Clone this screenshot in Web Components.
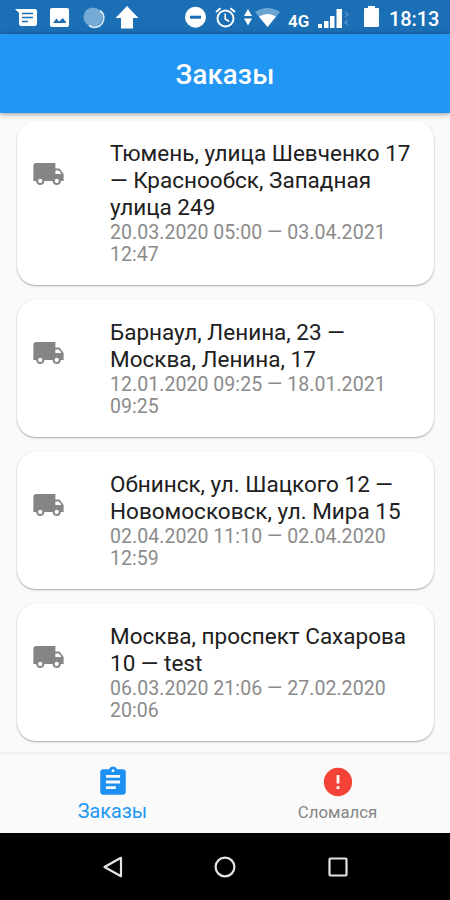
<!DOCTYPE html>
<html lang="ru">
<head>
<meta charset="utf-8">
<title>Заказы</title>
<style>
html,body{margin:0;height:100%;overflow:hidden}
body{font-family:Roboto,"Noto Sans",sans-serif;background:#fafafa}
</style>
</head>
<body>
<orders-app></orders-app>
<script>
const define = (name, html) => customElements.define(name, class extends HTMLElement {
  constructor() {
    super();
    this.attachShadow({ mode: 'open' }).innerHTML = html;
  }
});

define('status-bar', `
<style>
:host{display:block;height:34px;background:#1b6fb5;color:#fff;flex:none}
.row{display:grid;height:34px;grid-template-columns:15px 30px 34px 30px 71px 29px 34px 12px 33px 30px 46px 25px auto;align-items:center;white-space:nowrap}
svg{display:block;overflow:visible}
.net{font-size:17px;font-weight:600;padding-top:8px}
.time{font-size:20px;font-weight:500;padding-top:3px;letter-spacing:-.1px}
</style>
<div class="row">
<span></span>
<svg width="23" height="34" viewBox="0 0 23 34"><path fill="#fff" d="M0 9h20q2 0 2 2v13q0 2-2 2H6q-2 0-2-2V13z"/><path stroke="#1b6fb5" stroke-width="1.6" d="M7 13.5h11M7 17.5h11M7 21.5h6"/></svg>
<svg width="24" height="34" viewBox="0 0 24 34"><rect x="5" y="8" width="19" height="19" rx="2" fill="#fff"/><path fill="#1b6fb5" d="M8 23l3.500-4.500 2.500 3L18 18l3.500 5z"/></svg>
<svg width="22" height="34" viewBox="0 0 22 34"><circle cx="14" cy="17" r="9.500" fill="#75aad5"/><path d="M21 10.500a9.300 9.300 0 0 1-11 15" fill="none" stroke="#dbe9f5" stroke-width="1.800"/></svg>
<svg width="26" height="34" viewBox="0 0 26 34"><path fill="#fff" d="M18 6L29.500 18H24v10.500H12V18H6.500z"/></svg>
<svg width="24" height="34" viewBox="0 0 24 34"><circle cx="15.500" cy="17.200" r="10.500" fill="#fff"/><path fill="#1b6fb5" d="M10 15.700h11v3H10z"/></svg>
<svg width="22" height="34" viewBox="0 0 22 34"><g fill="none" stroke="#fff" stroke-width="2"><circle cx="16.500" cy="18.500" r="8"/><path d="M7 12l4.500-3.800M26 12l-4.500-3.800"/><path stroke-width="1.600" d="M16.200 13.500v5.500l4 2.500"/></g></svg>
<svg width="10" height="34" viewBox="0 0 10 34"><path fill="#fff" d="M1 16l4-7 4 7zM1 18.500h8l-4 7z"/></svg>
<svg width="26" height="34" viewBox="0 0 26 34"><path fill="#6ca4d2" d="M0 12Q12.500 4 25 12L12.500 27z"/><path fill="#fff" d="M4 16.500q8.500-5 17 0L12.500 27z"/></svg>
<span class="net">4G</span>
<svg width="34" height="34" viewBox="0 0 34 34"><path fill="#fff" d="M0 24h4v4H0zM6 21h4.500v7H6zM12 16h4.500v12H12zM18.500 9H24v19h-5.500z"/><path fill="none" stroke="#5793c4" stroke-width="1.500" d="M27 12l3 2.500-3 2.500M30 20l-3 2.500 3 2.500"/></svg>
<svg width="16" height="34" viewBox="0 0 16 34"><path fill="#fff" d="M1 8h3V6h7v2h3q1 0 1 1v17q0 1-1 1H1q-1 0-1-1V9q0-1 1-1z"/></svg>
<span class="time">18:13</span>
</div>`);

define('app-bar', `
<style>
:host{display:flex;height:79px;flex:none;background:#2196f3;color:#fff;align-items:center;justify-content:center;font-size:27.500px;font-weight:500;line-height:36px;box-shadow:0 1px 5px rgba(0,0,0,.42);z-index:1;position:relative;letter-spacing:.2px;padding:2px 0 0;box-sizing:border-box}
</style><slot></slot>`);

define('order-card', `
<style>
:host{display:grid;grid-template-columns:78px 1fr;background:#fff;border-radius:19px;padding:19px 14px 18px 15px;margin-bottom:15px;box-shadow:0 1px 2px rgba(0,0,0,.34);box-sizing:border-box;margin-left:17px;margin-right:16px;white-space:nowrap}
svg{margin-top:17px;display:block;width:33px;height:34px;fill:#858585}
.title{font-size:22.500px;line-height:27px;color:#202020}
.date{font-size:19.500px;line-height:22.500px;color:#8b8b8b;letter-spacing:.05px;padding-top:1px}
</style>
<svg viewBox="0 0 24 24"><path d="M20 8h-3V4H3c-1.100 0-2 .9-2 2v11h2c0 1.660 1.340 3 3 3s3-1.340 3-3h6c0 1.660 1.340 3 3 3s3-1.340 3-3h2v-5l-3-4zM6 18.500c-.83 0-1.500-.67-1.500-1.500s.67-1.500 1.500-1.500 1.500.67 1.500 1.500-.67 1.500-1.500 1.500zm13.500-9l1.960 2.500H17V9.500h2.500zm-1.500 9c-.83 0-1.500-.67-1.500-1.500s.67-1.500 1.500-1.500 1.500.67 1.500 1.500-.67 1.500-1.500 1.500z"/></svg>
<div><div class="title"><slot></slot></div><div class="date"><slot name="date"></slot></div></div>`);

define('tab-item', `
<style>
:host{display:flex;flex:1;flex-direction:column;align-items:center;font-size:var(--size,16.800px);color:var(--tint,#858585);line-height:24px;padding-top:11px}
::slotted(svg){display:block;width:34px;height:34px}
.label{margin-top:1px}
</style><slot name="icon"></slot><div class="label"><slot></slot></div>`);

define('tab-bar', `
<style>
:host{display:flex;height:80px;flex:none;background:#fafafa;border-top:1px solid #eee;box-sizing:border-box;box-shadow:0 -1px 1px rgba(0,0,0,.03);position:relative;z-index:1}
</style><slot></slot>`);

define('nav-bar', `
<style>
:host{display:flex;height:67px;flex:none;background:#000;justify-content:center;gap:81px;align-items:center}
svg{width:32px;height:32px;fill:none;stroke:#e4e4e4;stroke-width:2.200;stroke-linejoin:round}
</style>
<svg viewBox="0 0 32 32"><path d="M8.500 16L25 6.800v18.400z"/></svg>
<svg viewBox="0 0 32 32"><circle cx="16" cy="16" r="9.400"/></svg>
<svg viewBox="0 0 32 32"><rect x="7.500" y="7.500" width="17" height="17" rx="1"/></svg>`);

define('orders-app', `
<style>
:host{display:flex;flex-direction:column;width:450px;height:900px;background:#fafafa}
main{flex:1;min-height:0;overflow:hidden;padding-top:7.500px;box-sizing:border-box}
</style>
<status-bar></status-bar>
<app-bar>Заказы</app-bar>
<main>
<order-card>Тюмень, улица Шевченко 17<br>— Краснообск, Западная<br>улица 249<span slot="date">20.03.2020 05:00 — 03.04.2021<br>12:47</span></order-card>
<order-card>Барнаул, Ленина, 23 —<br>Москва, Ленина, 17<span slot="date">12.01.2020 09:25 — 18.01.2021<br>09:25</span></order-card>
<order-card>Обнинск, ул. Шацкого 12 —<br>Новомосковск, ул. Мира 15<span slot="date">02.04.2020 11:10 — 02.04.2020<br>12:59</span></order-card>
<order-card>Москва, проспект Сахарова<br>10 — test<span slot="date">06.03.2020 21:06 — 27.02.2020<br>20:06</span></order-card>
</main>
<tab-bar>
<tab-item style="--tint:#2196f3;--size:19.800px"><svg slot="icon" viewBox="0 0 24 24" fill="#1d90f2"><path d="M19 3h-4.180C14.400 1.840 13.300 1 12 1c-1.300 0-2.400.84-2.820 2H5c-1.100 0-2 .9-2 2v14c0 1.100.9 2 2 2h14c1.100 0 2-.9 2-2V5c0-1.100-.9-2-2-2zm-7 0c.55 0 1 .45 1 1s-.45 1-1 1-1-.45-1-1 .45-1 1-1zm2 14H7v-2h7v2zm3-4H7v-2h10v2zm0-4H7V7h10v2z"/></svg>Заказы</tab-item>
<tab-item><svg slot="icon" viewBox="0 0 24 24" fill="#f44336"><path d="M12 2C6.480 2 2 6.480 2 12s4.480 10 10 10 10-4.480 10-10S17.520 2 12 2zm1 15h-2v-2h2v2zm0-4h-2V7h2v6z"/></svg>Сломался</tab-item>
</tab-bar>
<nav-bar></nav-bar>`);
</script>
</body>
</html>
